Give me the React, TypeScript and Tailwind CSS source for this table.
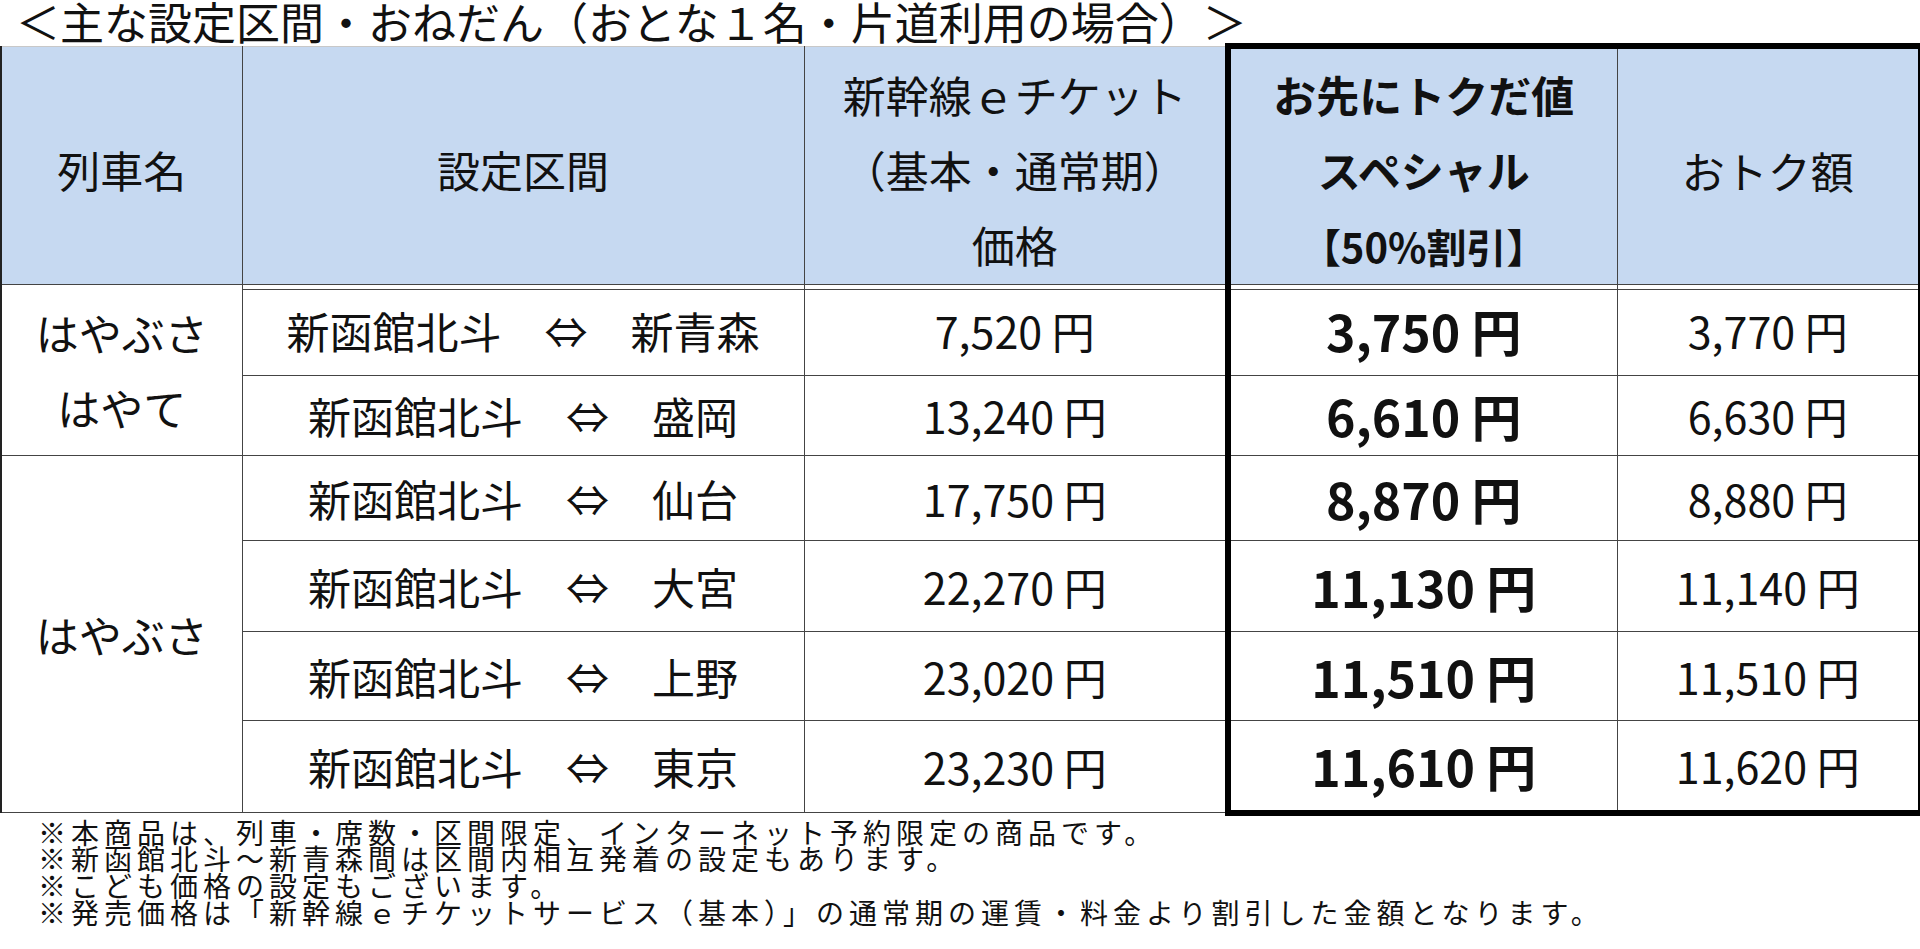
import React from 'react'

type Row = {
  from: string
  to: string
  base: string
  special: string
  save: string
}

const rows: Row[] = [
  { from: '新函館北斗', to: '新青森', base: '7,520', special: '3,750', save: '3,770' },
  { from: '新函館北斗', to: '盛岡', base: '13,240', special: '6,610', save: '6,630' },
  { from: '新函館北斗', to: '仙台', base: '17,750', special: '8,870', save: '8,880' },
  { from: '新函館北斗', to: '大宮', base: '22,270', special: '11,130', save: '11,140' },
  { from: '新函館北斗', to: '上野', base: '23,020', special: '11,510', save: '11,510' },
  { from: '新函館北斗', to: '東京', base: '23,230', special: '11,610', save: '11,620' },
]

const rowHeights = ['h-[91px]', 'h-[80px]', 'h-[85px]', 'h-[91px]', 'h-[89px]', 'h-[92px]']

const notes = [
  '※本商品は、列車・席数・区間限定、インターネット予約限定の商品です。',
  '※新函館北斗～新青森間は区間内相互発着の設定もあります。',
  '※こども価格の設定もございます。',
  '※発売価格は「新幹線ｅチケットサービス（基本）」の通常期の運賃・料金より割引した金額となります。',
]

export default function App() {
  return (
    <div className="w-[1920px] h-[949px] overflow-hidden bg-white text-[#111] font-['Noto_Sans_CJK_JP',sans-serif]">
      <h1 className="pl-[16px] text-[44px] leading-[43px] font-normal whitespace-nowrap">
        ＜主な設定区間・おねだん（おとな１名・片道利用の場合）＞
      </h1>

      <table className="table-fixed border-collapse w-[1920px]">
        <colgroup>
          <col className="w-[241px]" />
          <col className="w-[562px]" />
          <col className="w-[424px]" />
          <col className="w-[389px]" />
          <col className="w-[304px]" />
        </colgroup>
        <thead>
          <tr className="h-[237px] bg-[#c6d9f1] text-[43px] leading-[75px]">
            <th className="font-normal border border-[#444] border-l-2 border-l-[#222] border-t-[#c8c8c8] pt-2">
              列車名
            </th>
            <th className="font-normal border border-[#444] border-t-[#c8c8c8] pt-2">設定区間</th>
            <th className="font-normal border border-[#444] border-t-[#c8c8c8] pt-2">
              新幹線ｅチケット
              <br />
              （基本・通常期）
              <br />
              価格
            </th>
            <th className="font-bold border border-[#444] border-l-[6px] border-l-black border-t-[6px] border-t-black pt-2">
              お先にトクだ値
              <br />
              スペシャル
              <br />
              <span className="text-[40px]">【50%割引】</span>
            </th>
            <th className="font-normal border border-[#444] border-r-[6px] border-r-black border-t-[6px] border-t-black pt-2">
              おトク額
            </th>
          </tr>
        </thead>
        <tbody>
          {rows.map((r, i) => {
            const first = i === 0
            const last = i === rows.length - 1
            const dbl = first ? 'shadow-[inset_0_4px_0_#fff,inset_0_5px_0_#444]' : ''
            return (
              <tr key={r.to} className={rowHeights[i]}>
                {i === 0 && (
                  <td
                    rowSpan={2}
                    className="border border-[#444] border-l-2 border-l-[#222] text-center text-[43px] leading-[75px]"
                  >
                    はやぶさ
                    <br />
                    はやて
                  </td>
                )}
                {i === 2 && (
                  <td
                    rowSpan={4}
                    className="border border-[#444] border-l-2 border-l-[#222] text-center text-[43px] leading-[75px]"
                  >
                    はやぶさ
                  </td>
                )}
                <td className={`border border-[#444] text-center text-[43px] whitespace-pre ${dbl}`}>
                  {r.from}　⇔　{r.to}
                </td>
                <td className={`border border-[#444] text-center text-[43px] ${dbl}`}>{r.base} 円</td>
                <td
                  className={`border border-[#444] border-l-[6px] border-l-black text-center text-[50px] font-bold ${
                    last ? 'border-b-[6px] border-b-black' : ''
                  } ${dbl}`}
                >
                  {r.special} 円
                </td>
                <td
                  className={`border border-[#444] border-r-[6px] border-r-black text-center text-[43px] ${
                    last ? 'border-b-[6px] border-b-black' : ''
                  } ${dbl}`}
                >
                  {r.save} 円
                </td>
              </tr>
            )
          })}
        </tbody>
      </table>

      <div className="mt-[3px] pl-[38px] text-[28px] tracking-[5px] leading-[26.7px] whitespace-nowrap">
        {notes.map(n => (
          <p key={n}>{n}</p>
        ))}
      </div>
    </div>
  )
}
